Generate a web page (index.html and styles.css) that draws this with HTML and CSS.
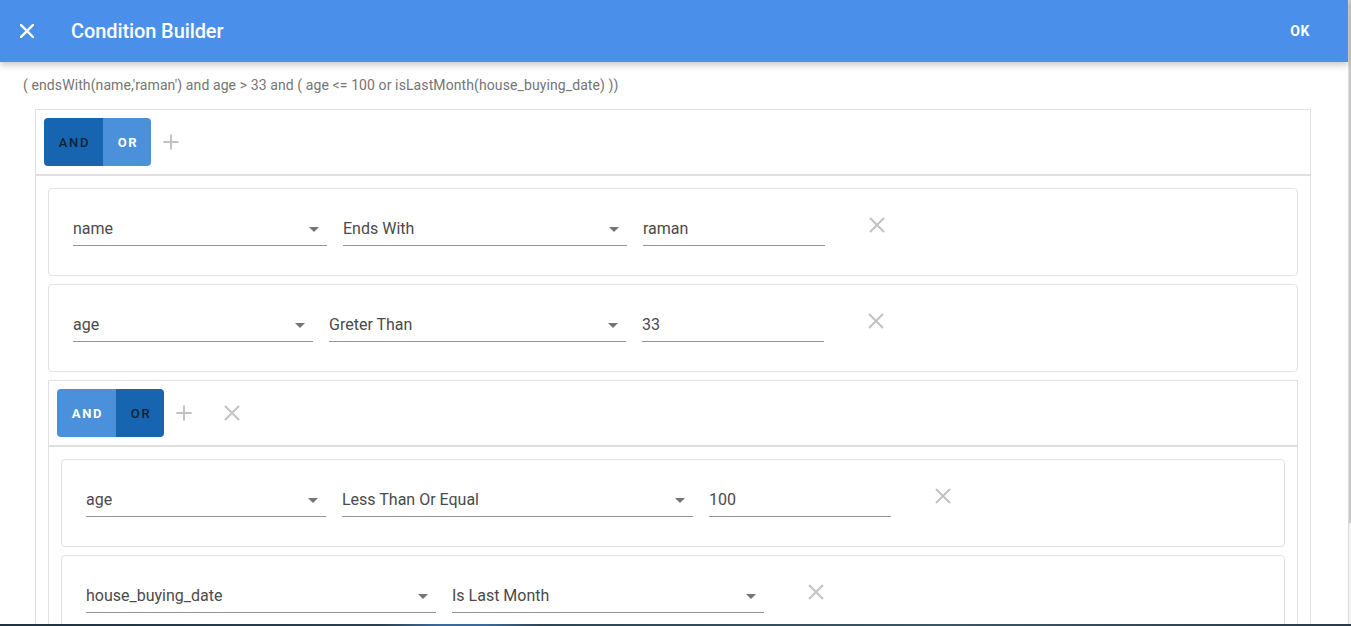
FILE: index.html
```html
<!DOCTYPE html>
<html lang="en">
<head>
<meta charset="utf-8">
<title>Condition Builder</title>
<link rel="stylesheet" href="styles.css">
</head>
<body>
<div class="app">
  <div class="main">
    <header class="toolbar">
      <button class="tb-close" aria-label="Close">
        <svg width="14" height="14" viewBox="0 0 14 14"><path d="M1 1L13 13M13 1L1 13" stroke="#fff" stroke-width="2.4" stroke-linecap="square"/></svg>
      </button>
      <h1 class="tb-title">Condition Builder</h1>
      <span class="tb-spacer"></span>
      <button class="tb-ok">OK</button>
    </header>

    <main class="content">
      <p class="expr">( endsWith(name,'raman') and age &gt; 33 and ( age &lt;= 100 or isLastMonth(house_buying_date) ))</p>

      <section class="group group-outer">
        <div class="group-head">
          <div class="toggle">
            <span class="seg seg-and seg-on">AND</span>
            <span class="seg seg-or seg-off">OR</span>
          </div>
          <span class="icon-btn icon-add">
            <svg width="24" height="24" viewBox="0 0 24 24"><path d="M12 4.5V19.5M4.5 12H19.5" stroke="#c2c2c2" stroke-width="2"/></svg>
          </span>
        </div>
        <div class="group-body">
          <div class="card">
            <div class="field select w254"><span class="val">name</span><span class="arrow"></span></div>
            <div class="field select w284"><span class="val">Ends With</span><span class="arrow"></span></div>
            <div class="field input w182"><span class="val">raman</span></div>
            <span class="icon-btn icon-rm">
              <svg width="24" height="24" viewBox="0 0 24 24"><path d="M5 5L19 19M19 5L5 19" stroke="#c2c2c2" stroke-width="2"/></svg>
            </span>
          </div>

          <div class="card">
            <div class="field select w240"><span class="val">age</span><span class="arrow"></span></div>
            <div class="field select w297"><span class="val">Greter Than</span><span class="arrow"></span></div>
            <div class="field input w182"><span class="val">33</span></div>
            <span class="icon-btn icon-rm">
              <svg width="24" height="24" viewBox="0 0 24 24"><path d="M5 5L19 19M19 5L5 19" stroke="#c2c2c2" stroke-width="2"/></svg>
            </span>
          </div>

          <section class="group group-inner">
            <div class="group-head">
              <div class="toggle">
                <span class="seg seg-and seg-off">AND</span>
                <span class="seg seg-or seg-on">OR</span>
              </div>
              <span class="icon-btn icon-add">
                <svg width="24" height="24" viewBox="0 0 24 24"><path d="M12 4.5V19.5M4.5 12H19.5" stroke="#c2c2c2" stroke-width="2"/></svg>
              </span>
              <span class="icon-btn icon-del">
                <svg width="24" height="24" viewBox="0 0 24 24"><path d="M5 5L19 19M19 5L5 19" stroke="#c2c2c2" stroke-width="2"/></svg>
              </span>
            </div>
            <div class="group-body">
              <div class="card">
                <div class="field select w240"><span class="val">age</span><span class="arrow"></span></div>
                <div class="field select w351"><span class="val">Less Than Or Equal</span><span class="arrow"></span></div>
                <div class="field input w182"><span class="val">100</span></div>
                <span class="icon-btn icon-rm">
                  <svg width="24" height="24" viewBox="0 0 24 24"><path d="M5 5L19 19M19 5L5 19" stroke="#c2c2c2" stroke-width="2"/></svg>
                </span>
              </div>

              <div class="card">
                <div class="field select w350"><span class="val">house_buying_date</span><span class="arrow"></span></div>
                <div class="field select w312"><span class="val">Is Last Month</span><span class="arrow"></span></div>
                <span class="icon-btn icon-rm">
                  <svg width="24" height="24" viewBox="0 0 24 24"><path d="M5 5L19 19M19 5L5 19" stroke="#c2c2c2" stroke-width="2"/></svg>
                </span>
              </div>
            </div>
          </section>
        </div>
      </section>
    </main>
  </div>

  <div class="scrollbar"><div class="thumb"></div></div>
</div>
<div class="taskbar"></div>
</body>
</html>
```

FILE: styles.css
```css
html, body {
  margin: 0;
  padding: 0;
  height: 100%;
  overflow: hidden;
  background: #fff;
  font-family: Roboto, "Noto Sans", "Liberation Sans", sans-serif;
}

.app {
  display: flex;
  height: 626px;
}

.main {
  flex: 1;
  min-width: 0;
  display: flex;
  flex-direction: column;
}

/* Toolbar */
.toolbar {
  flex: 0 0 62px;
  height: 62px;
  background: #4a8fea;
  color: #fff;
  display: flex;
  align-items: center;
  padding: 0 38px 0 20px;
  box-shadow: 0 3px 7px rgba(0, 0, 0, 0.22);
  position: relative;
  z-index: 1;
}

.tb-close {
  width: 14px;
  height: 14px;
  padding: 0;
  border: 0;
  background: none;
  display: flex;
  cursor: pointer;
}

.tb-title {
  margin: 0 0 0 37px;
  font-size: 20px;
  font-weight: 500;
  letter-spacing: -0.1px;
}

.tb-spacer {
  flex: 1;
}

.tb-ok {
  border: 0;
  background: none;
  padding: 0;
  color: #fff;
  font-family: inherit;
  font-size: 14px;
  font-weight: 700;
  letter-spacing: 0.6px;
  cursor: pointer;
}

/* Content */
.content {
  flex: 1;
  overflow: hidden;
}

.expr {
  margin: 15px 0 15px;
  padding-left: 23px;
  font-size: 14px;
  line-height: 17px;
  letter-spacing: 0.1px;
  color: #757575;
  white-space: nowrap;
}

.group {
  border: 1px solid #e0e0e0;
}

.group-outer {
  margin: 0 37px 0 35px;
}

.group-head {
  display: flex;
  align-items: center;
  padding: 8px;
  border-bottom: 2px solid #e0e0e0;
}

.group-body {
  display: flex;
  flex-direction: column;
  gap: 8px;
  padding: 12px;
}

/* AND / OR toggle */
.toggle {
  display: flex;
  height: 48px;
  border-radius: 4px;
  overflow: hidden;
}

.seg {
  display: flex;
  align-items: center;
  justify-content: center;
  box-sizing: border-box;
  font-size: 13px;
  font-weight: 500;
  letter-spacing: 1.7px;
  padding-left: 2px;
}

.seg-and {
  width: 59px;
}

.seg-or {
  width: 48px;
}

.seg-on {
  background: #1765b1;
  color: #152033;
}

.seg-off {
  background: #4a90da;
  color: #fff;
  font-weight: 700;
}

.icon-btn {
  width: 24px;
  height: 24px;
  display: flex;
  align-items: center;
  justify-content: center;
  flex: 0 0 24px;
}

.icon-add {
  margin-left: 8px;
}

.icon-del {
  margin-left: 24px;
}

/* Condition cards */
.card {
  box-sizing: border-box;
  height: 88px;
  border: 1px solid #e0e0e0;
  border-radius: 4px;
  padding: 24px 24px 0;
  display: flex;
  align-items: flex-start;
  gap: 16px;
}

.field {
  box-sizing: border-box;
  height: 33px;
  padding-bottom: 1px;
  border-bottom: 1px solid #949494;
  display: flex;
  align-items: center;
  font-size: 16px;
  color: #4a4a4a;
  flex: 0 0 auto;
}

.val {
  white-space: nowrap;
}

.arrow {
  margin-left: auto;
  margin-right: 8px;
  margin-top: 2px;
  width: 0;
  height: 0;
  border-left: 5px solid transparent;
  border-right: 5px solid transparent;
  border-top: 5px solid #757575;
}

.icon-rm {
  margin-left: 24px;
}

.w182 { width: 182px; }
.w240 { width: 240px; }
.w254 { width: 254px; }
.w284 { width: 284px; }
.w297 { width: 297px; }
.w312 { width: 312px; }
.w350 { width: 350px; }
.w351 { width: 351px; }

/* Scrollbar strip on the right */
.scrollbar {
  flex: 0 0 3px;
  width: 3px;
  background: #f1f1f1;
  border-left: 1px solid #dcdcdc;
  box-sizing: border-box;
}

.thumb {
  height: 523px;
  background: #c9c9c9;
}

/* Bottom dark strip */
.taskbar {
  position: fixed;
  left: 0;
  right: 0;
  bottom: 0;
  height: 2px;
  background: linear-gradient(90deg, #22313e 0%, #2c3f4d 28%, #3b6b9c 32.5%, #3a6a98 36%, #2f4552 40%, #3e5662 70%, #2b3a46 100%);
}
```
